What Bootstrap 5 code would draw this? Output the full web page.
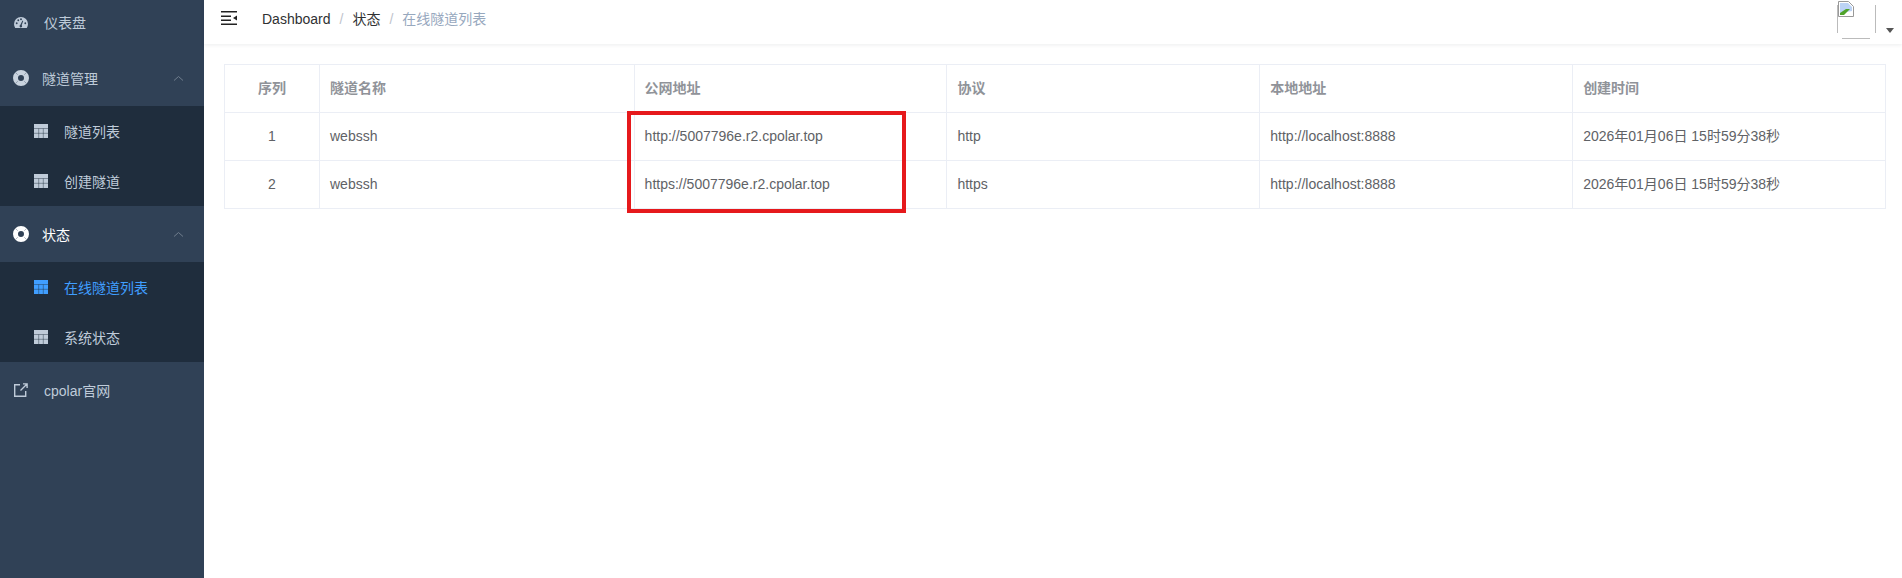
<!DOCTYPE html>
<html lang="zh-CN">
<head>
<meta charset="utf-8">
<title>在线隧道列表</title>
<link href="https://cdn.jsdelivr.net/npm/bootstrap@5.3.0/dist/css/bootstrap.min.css" rel="stylesheet">
<style>
html,body{height:100%;overflow:hidden}
body{font-family:"Liberation Sans","Noto Sans CJK SC",sans-serif;font-size:14px;background:#fff}
.shell{height:578px}
.side{width:204px;flex:none;background:#304156;color:#bfcbd9;overflow:hidden}
.side-item{height:56px;color:#bfcbd9;text-decoration:none}
.side-item span,.sub-item span{padding-top:2px}
.side-first{height:50px;padding-bottom:5px}
.side-icon-a{margin-left:14px;margin-right:16px;flex:none}
.side-icon-b{margin-left:13px;margin-right:13px;flex:none}
.side-chev{margin-left:auto;margin-right:20px}
.side-on{color:#fff}
.subnav{background:#1f2d3d}
.sub-item{height:50px;padding-left:34px;color:#bfcbd9;text-decoration:none}
.sub-item svg{margin-right:16px;flex:none}
.sub-on{color:#409eff}
.topbar{height:44px;flex:none;box-shadow:0 1px 4px rgba(0,21,41,.08)}
.burger{margin-left:17px;margin-right:25px;padding-top:11px}
.crumb-nav{padding-top:9px}
.crumbs{margin:0;font-size:14px;--bs-breadcrumb-divider-color:#c0c4cc;--bs-breadcrumb-item-padding-x:9px;--bs-breadcrumb-item-active-color:#97a8be}
.crumbs .breadcrumb-item{color:#303133}
.crumbs .breadcrumb-item.active{color:#97a8be}
.avatar-box{width:39px;height:39px;position:relative;background:linear-gradient(#bbb,#bbb) left 5px/1px 28px no-repeat,linear-gradient(#bbb,#bbb) right 5px/1px 28px no-repeat,linear-gradient(#bbb,#bbb) 5px bottom/28px 1px no-repeat}
.avatar-box svg{position:absolute;left:1px;top:1px}
.avatar-wrap{margin-right:8px}
.avatar-caret{width:0;height:0;border:4px solid transparent;border-top:5px solid #555;border-bottom:0;margin-left:10px;margin-top:28px}
.content{padding:20px 0 0 20px}
.tbl-wrap{position:relative;width:1662px}
.tunnels{table-layout:fixed;margin:0;width:100%;border-color:#ebeef5;--bs-table-color:#606266;font-size:14px}
.tunnels th,.tunnels td{height:48px;padding:0 10px;vertical-align:middle;border:1px solid #ebeef5;color:#606266;line-height:23px}
.tunnels th{color:#909399;font-weight:700}
.col-num{width:95px}
.col-name{width:314.6px}
.callout{position:absolute;left:403px;top:47px;width:279px;height:102px;border:4px solid #e6191c;pointer-events:none}
</style>
</head>
<body>
<svg class="d-none"><defs>
<g id="grid-lines"><path fill="none" stroke="#1f2d3d" stroke-opacity=".55" stroke-width=".8" d="M0 4.500h14M0 9.300h14M4.700 4.500V14M9.300 4.500V14"/></g>
<g id="ring-cuts"><path fill="none" stroke="#304156" stroke-opacity=".4" stroke-width=".9" d="M2.300 2.300l2.500 2.500M13.700 2.300l-2.500 2.500M2.300 13.700l2.500-2.500M13.700 13.700l-2.500-2.500"/></g>
</defs></svg>
<div class="d-flex shell">
  <aside class="side">
    <a class="side-item side-first d-flex align-items-center" href="#">
      <svg class="side-icon-a" width="14" height="11" viewBox="0.5 2 15 11.700"><path fill="#bfcbd9" fill-rule="evenodd" d="M8 2a7.500 7.500 0 0 0-7.500 7.500c0 1.600.5 3 1.300 4.200h12.400c.8-1.200 1.300-2.600 1.300-4.200A7.500 7.500 0 0 0 8 2zM3.400 9.600a1 1 0 1 1 0-2 1 1 0 0 1 0 2zm1.700-3.200a1 1 0 1 1 0-2 1 1 0 0 1 0 2zM8 5.400a1 1 0 1 1 0-2 1 1 0 0 1 0 2zm1.200 6.400a1.400 1.400 0 1 1-2-1.400l2.400-4.600.8.400-1.700 4.700c.3.200.5.500.5.900zm3.400-2.200a1 1 0 1 1 0-2 1 1 0 0 1 0 2z"/></svg>
      <span>仪表盘</span>
    </a>
    <a class="side-item d-flex align-items-center" href="#">
      <svg class="side-icon-b" width="16" height="16" viewBox="0 0 16 16"><path fill="#c9d3de" fill-rule="evenodd" d="M8 0a8 8 0 1 1 0 16A8 8 0 0 1 8 0zm0 5a3 3 0 1 0 0 6 3 3 0 0 0 0-6z"/><use href="#ring-cuts"/></svg>
      <span>隧道管理</span>
      <svg class="side-chev" width="11" height="7" viewBox="0 0 11 7"><path fill="none" stroke="#6f7d8d" d="M1 5.500l4.500-4 4.500 4"/></svg>
    </a>
    <div class="subnav">
      <a class="sub-item d-flex align-items-center" href="#">
        <svg width="14" height="14" viewBox="0 0 14 14"><rect width="14" height="14" fill="#bfcbd9"/><use href="#grid-lines"/></svg>
        <span>隧道列表</span>
      </a>
      <a class="sub-item d-flex align-items-center" href="#">
        <svg width="14" height="14" viewBox="0 0 14 14"><rect width="14" height="14" fill="#bfcbd9"/><use href="#grid-lines"/></svg>
        <span>创建隧道</span>
      </a>
    </div>
    <a class="side-item side-on d-flex align-items-center" href="#">
      <svg class="side-icon-b" width="16" height="16" viewBox="0 0 16 16"><path fill="#fff" fill-rule="evenodd" d="M8 0a8 8 0 1 1 0 16A8 8 0 0 1 8 0zm0 5a3 3 0 1 0 0 6 3 3 0 0 0 0-6z"/><use href="#ring-cuts"/></svg>
      <span>状态</span>
      <svg class="side-chev" width="11" height="7" viewBox="0 0 11 7"><path fill="none" stroke="#6f7d8d" d="M1 5.500l4.500-4 4.500 4"/></svg>
    </a>
    <div class="subnav">
      <a class="sub-item sub-on d-flex align-items-center" href="#">
        <svg width="14" height="14" viewBox="0 0 14 14"><rect width="14" height="14" fill="#409eff"/><use href="#grid-lines"/></svg>
        <span>在线隧道列表</span>
      </a>
      <a class="sub-item d-flex align-items-center" href="#">
        <svg width="14" height="14" viewBox="0 0 14 14"><rect width="14" height="14" fill="#bfcbd9"/><use href="#grid-lines"/></svg>
        <span>系统状态</span>
      </a>
    </div>
    <a class="side-item d-flex align-items-center" href="#">
      <svg class="side-icon-a" width="14" height="14" viewBox="0 0 14 14"><path fill="none" stroke="#bfcbd9" stroke-width="1.400" d="M6 1.700H.7v11.600h11V8M6.500 7.500L13 1M9 .9h4.100V5"/></svg>
      <span>cpolar官网</span>
    </a>
  </aside>
  <main class="flex-grow-1 d-flex flex-column">
    <header class="topbar d-flex">
      <div class="burger">
        <svg class="d-block" width="16" height="14" viewBox="0 0 16 14"><path fill="#222" d="M0 0h16v1.500H0zM0 4.500h10v1.500H0zM0 8.500h10v1.500H0zM0 12.500h16V14H0zM16 4.500v5l-4-2.500z"/></svg>
      </div>
      <nav aria-label="breadcrumb" class="crumb-nav">
        <ol class="breadcrumb crumbs">
          <li class="breadcrumb-item">Dashboard</li>
          <li class="breadcrumb-item">状态</li>
          <li class="breadcrumb-item active" aria-current="page">在线隧道列表</li>
        </ol>
      </nav>
      <div class="ms-auto d-flex avatar-wrap">
        <div class="avatar-box">
          <svg width="16" height="16" viewBox="0 0 16 16"><path fill="#fff" stroke="#999" d="M.5.500h10l5 5v10H.5z"/><path fill="#bcd3f5" d="M2 2h8l4 4v4L2 12z"/><path fill="#4fa32a" d="M2 14v-2l6-4h4l-6 6z"/></svg>
        </div>
        <div class="avatar-caret"></div>
      </div>
    </header>
    <section class="content">
      <div class="tbl-wrap">
        <table class="table tunnels">
          <thead>
            <tr><th class="col-num text-center">序列</th><th class="col-name">隧道名称</th><th>公网地址</th><th>协议</th><th>本地地址</th><th>创建时间</th></tr>
          </thead>
          <tbody>
            <tr><td class="text-center">1</td><td>webssh</td><td>http://5007796e.r2.cpolar.top</td><td>http</td><td>http://localhost:8888</td><td>2026年01月06日 15时59分38秒</td></tr>
            <tr><td class="text-center">2</td><td>webssh</td><td>https://5007796e.r2.cpolar.top</td><td>https</td><td>http://localhost:8888</td><td>2026年01月06日 15时59分38秒</td></tr>
          </tbody>
        </table>
        <div class="callout"></div>
      </div>
    </section>
  </main>
</div>
<script src="https://cdn.jsdelivr.net/npm/bootstrap@5.3.0/dist/js/bootstrap.bundle.min.js"></script>
</body>
</html>
